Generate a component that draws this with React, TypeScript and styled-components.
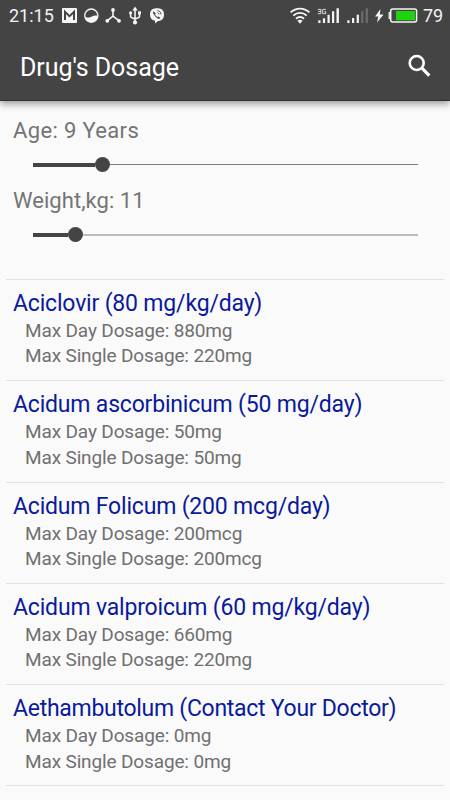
import React from "react";
import styled, { createGlobalStyle } from "styled-components";

const GlobalStyle = createGlobalStyle`
  * { box-sizing: border-box; }
  body { margin: 0; background: #fafafa; font-family: Roboto, "Liberation Sans", sans-serif; }
`;

const Screen = styled.div`
  width: 450px;
  height: 800px;
  overflow: hidden;
  background: #fafafa;
  display: flex;
  flex-direction: column;
`;

const Header = styled.header`
  flex: none;
  height: 101px;
  background: #444444;
  border-bottom: 1px solid #303030;
  box-shadow: 0 3px 7px rgba(0, 0, 0, 0.38);
  color: #fff;
`;

const StatusBar = styled.div`
  height: 34px;
  padding: 0 7px 2px 9px;
  display: flex;
  align-items: center;
  justify-content: space-between;
  font-size: 18px;
  line-height: 32px;
  color: #f2f2f2;
`;

const StatusGroup = styled.div`
  display: flex;
  align-items: center;
  svg { display: block; }
`;

const Clock = styled.span`
  width: 52px;
`;

const Battery = styled.span`
  width: 23px;
  padding-left: 3px;
  letter-spacing: -0.2px;
  white-space: nowrap;
`;

const AppBar = styled.div`
  height: 66px;
  padding: 0 17px 0 20px;
  display: flex;
  align-items: center;
  justify-content: space-between;
  svg { margin-bottom: 2px; }
`;

const Title = styled.h1`
  margin: 2px 0 0;
  font-size: 25px;
  line-height: 30px;
  font-weight: 400;
  letter-spacing: -0.06px;
`;

const Controls = styled.section`
  flex: none;
  height: 178px;
  padding: 14px 6px 0;
`;

const Control = styled.div`
  height: 70.4px;
  padding: 0 7px;
`;

const Label = styled.div<{ $spacing: number }>`
  height: 32px;
  font-size: 22px;
  line-height: 32px;
  color: #747474;
  white-space: nowrap;
  letter-spacing: ${(p) => p.$spacing}px;
`;

const Track = styled.div`
  display: flex;
  align-items: center;
  height: 35px;
  padding: 0 19.5px;
`;

const Filled = styled.div<{ $width: number }>`
  width: ${(p) => p.$width}px;
  height: 4px;
  background: #444;
`;

const Thumb = styled.div`
  width: 15px;
  height: 15px;
  border-radius: 50%;
  background: #444;
`;

const Rest = styled.div<{ $soft: boolean }>`
  flex: 1;
  height: ${(p) => (p.$soft ? 2 : 1)}px;
  background: ${(p) => (p.$soft ? "#bdbdbd" : "#7d7d7d")};
`;

const List = styled.ul`
  margin: 0 6px;
  padding: 0;
  list-style: none;
  border-top: 1px solid #e2e2e2;
`;

const Item = styled.li`
  height: 101.3px;
  padding: 10px 7px 0;
  border-bottom: 1px solid #e2e2e2;
`;

const Name = styled.div<{ $spacing: number }>`
  font-size: 23px;
  line-height: 28px;
  color: #0a1a9c;
  white-space: nowrap;
  letter-spacing: ${(p) => p.$spacing}px;
`;

const Dose = styled.div`
  padding-left: 12px;
  font-size: 19px;
  line-height: 25.4px;
  letter-spacing: -0.14px;
  color: #707070;
  white-space: nowrap;
`;

const drugs = [
  { name: "Aciclovir (80 mg/kg/day)", day: "880mg", single: "220mg", spacing: -0.18 },
  { name: "Acidum ascorbinicum (50 mg/day)", day: "50mg", single: "50mg", spacing: -0.19 },
  { name: "Acidum Folicum (200 mcg/day)", day: "200mcg", single: "200mcg", spacing: -0.19 },
  { name: "Acidum valproicum (60 mg/kg/day)", day: "660mg", single: "220mg", spacing: -0.18 },
  { name: "Aethambutolum (Contact Your Doctor)", day: "0mg", single: "0mg", spacing: -0.28 },
];

const NotificationIcons = () => (
  <svg width="105" height="20" viewBox="61 6 105 20" fill="none" stroke="#f5f5f5">
    <rect x="62" y="8" width="15" height="15" rx="1" fill="#f5f5f5" stroke="none" />
    <path d="M65 20V11.8l4.5 4.4 4.5-4.4V20" stroke="#444" strokeWidth="2" />
    <circle cx="91.3" cy="15.6" r="6.6" strokeWidth="1.3" />
    <path d="M84.7 16.2c2 2 4.200 1.600 6.600.5 2.500-1.200 4.400-1.500 6.600-.8a6.600 6.600 0 1 1-13.200.3z" fill="#f5f5f5" stroke="none" />
    <path d="M113 10v6.2M113 16.2l-6 4.6M113 16.2l6.2 4.6" strokeWidth="1.6" />
    <g fill="#f5f5f5" stroke="none">
      <circle cx="113" cy="10" r="1.9" />
      <circle cx="107.3" cy="20.8" r="1.9" />
      <circle cx="119" cy="20.8" r="1.9" />
      <path d="M135 6.5l2.7 4h-5.4z" />
      <circle cx="135" cy="22.4" r="2.1" />
      <circle cx="130.6" cy="12.8" r="1.6" />
      <rect x="138" y="11.3" width="3" height="3" />
    </g>
    <path d="M135 9v13M130.6 13v3.2q0 1.3 1.3 1.6l3.1 1.2M139.5 13v3.2q0 1.3-1.3 1.6L135 19" strokeWidth="1.6" />
    <path d="M157 8.2c4.7 0 7 2 7 6.3 0 4.5-2.4 6.4-6 6.5l-3 2.4v-2.7c-3.6-.7-5-2.8-5-6.2 0-4.3 2.3-6.3 7-6.3z" fill="#f5f5f5" stroke="none" />
    <path d="M153.6 11.2c-.7.7-.7 1.6 0 2.9 1 1.9 2.3 3.2 4.2 4.3 1.1.6 1.9.4 2.5-.5l-1.7-1.5-1.1.6c-1.3-.7-2.1-1.6-2.5-2.8l.8-.8z" fill="#444" stroke="none" />
    <path d="M157.3 10.6c2.3.2 3.6 1.5 3.7 3.9M157.5 12.6c1 .1 1.5.7 1.6 1.7" stroke="#444" strokeWidth=".9" />
  </svg>
);

const SignalIcons = () => (
  <svg width="131" height="20" viewBox="289 6 131 20" fill="#f5f5f5">
    <g fill="none" stroke="#f5f5f5" strokeWidth="1.9">
      <path d="M290.6 12.4c5.6-5.1 13.2-5.1 18.8 0" />
      <path d="M293.3 15.6c4-3.6 9.4-3.6 13.4 0" />
      <path d="M296 18.7c2.4-2.1 5.6-2.1 8 0" />
    </g>
    <path d="M300 23.8l-2.6-3.1q2.6-2 5.2 0z" />
    <g fill="none" stroke="#e8e8e8" strokeWidth="0.9">
      <path d="M317.8 9.4h3.1v4.3h-3.1M318.4 11.5h2.5M325.8 9.4h-3.1v4.3h3.1v-2h-1.4" />
    </g>
    <rect x="318.3" y="20.3" width="2.2" height="2.7" />
    <rect x="322.9" y="18.3" width="2.2" height="4.7" />
    <rect x="327.5" y="14.8" width="2.2" height="8.2" />
    <rect x="332" y="11.3" width="2.2" height="11.7" />
    <rect x="336.5" y="8.3" width="2.4" height="14.7" />
    <rect x="347.3" y="20.3" width="2.2" height="2.7" />
    <rect x="352" y="18" width="2.2" height="5" />
    <rect x="356.7" y="14.7" width="2.2" height="8.3" />
    <rect x="361.2" y="11.3" width="2.2" height="11.7" fill="#6d6d6d" />
    <rect x="365.7" y="8.3" width="2.2" height="14.7" fill="#6d6d6d" />
    <path d="M380.5 9l-5.5 7.5h3.3l-1.3 6 6.6-8h-3.8z" />
    <path d="M390.3 12.7h-1.1v5.6h1.1" fill="none" stroke="#f5f5f5" strokeWidth="1.3" />
    <rect x="390.7" y="8.9" width="25.9" height="13.2" rx="2" fill="none" stroke="#f5f5f5" strokeWidth="1.5" />
    <rect x="396" y="11" width="19" height="9.3" fill="#1fd30f" />
  </svg>
);

const SearchIcon = () => (
  <svg width="26" height="26" viewBox="407 53 26 26" fill="none" stroke="#fff">
    <circle cx="416.7" cy="63" r="7" strokeWidth="2.6" />
    <path d="M421.9 68.2l7.4 7.4" strokeWidth="3.2" />
  </svg>
);

export default function App() {
  return (
    <Screen>
      <GlobalStyle />
      <Header>
        <StatusBar>
          <StatusGroup>
            <Clock>21:15</Clock>
            <NotificationIcons />
          </StatusGroup>
          <StatusGroup>
            <SignalIcons />
            <Battery>79</Battery>
          </StatusGroup>
        </StatusBar>
        <AppBar>
          <Title>Drug's Dosage</Title>
          <SearchIcon />
        </AppBar>
      </Header>
      <Controls>
        <Control>
          <Label $spacing={0.35}>Age: 9 Years</Label>
          <Track>
            <Filled $width={62} />
            <Thumb />
            <Rest $soft={false} />
          </Track>
        </Control>
        <Control>
          <Label $spacing={0.05}>Weight,kg: 11</Label>
          <Track>
            <Filled $width={35} />
            <Thumb />
            <Rest $soft />
          </Track>
        </Control>
      </Controls>
      <List>
        {drugs.map((d) => (
          <Item key={d.name}>
            <Name $spacing={d.spacing}>{d.name}</Name>
            <Dose>Max Day Dosage: {d.day}</Dose>
            <Dose>Max Single Dosage: {d.single}</Dose>
          </Item>
        ))}
      </List>
    </Screen>
  );
}
